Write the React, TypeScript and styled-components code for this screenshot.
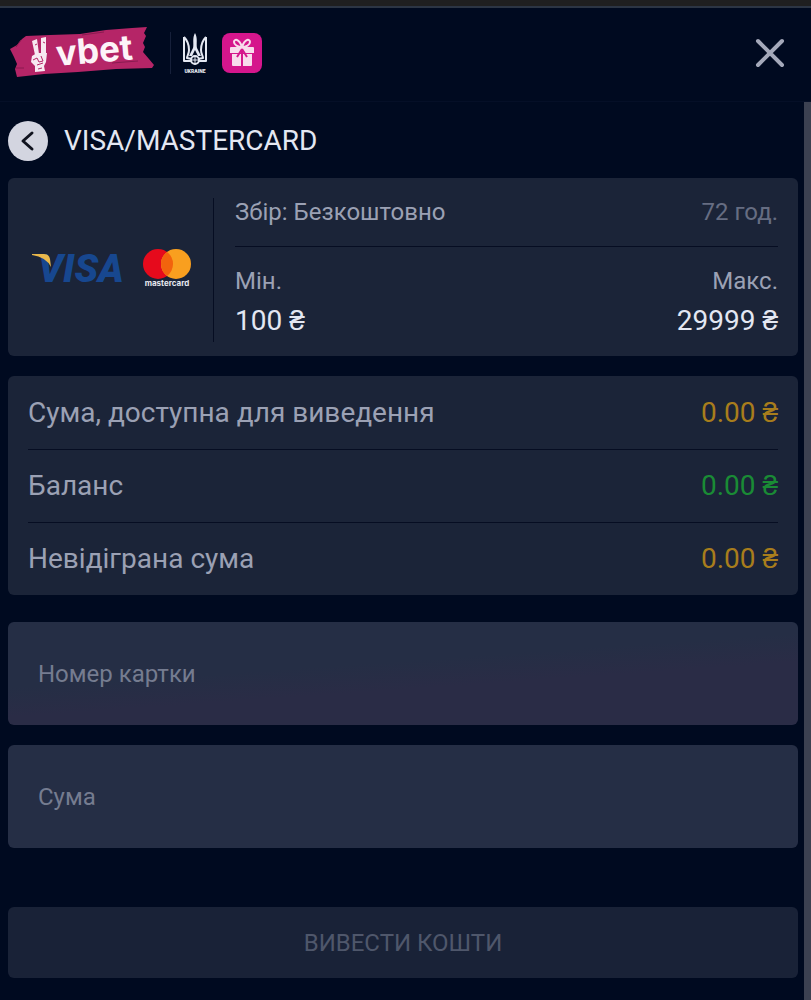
import React, { useState } from "react";
import styled, { createGlobalStyle } from "styled-components";

const GlobalStyle = createGlobalStyle`
  *, *::before, *::after { box-sizing: border-box; }
  body {
    margin: 0;
    background: #000a20;
    color: #e3e7f2;
    font-family: Roboto, "Liberation Sans", sans-serif;
  }
  h1, dl, dt, dd, p { margin: 0; font-weight: 400; }
`;

const Page = styled.div`
  display: flex;
  flex-direction: column;
  min-height: 100vh;
  border-top: 6px solid #1f1f20;
`;

const Header = styled.header`
  display: flex;
  align-items: center;
  justify-content: space-between;
  height: 96px;
  padding: 0 24px 4px 8px;
  border-top: 2px solid #2c3544;
  border-bottom: 1px solid #050f27;
`;

const Brand = styled.div`
  display: flex;
  align-items: center;
`;

const BrandLink = styled.a`
  display: flex;
`;

const BrandDivider = styled.span`
  width: 1px;
  height: 42px;
  margin: 0 12px 0 14px;
  background: #16203a;
`;

const GiftButton = styled.button`
  display: flex;
  align-items: center;
  justify-content: center;
  width: 40px;
  height: 40px;
  margin-left: 15px;
  padding: 0;
  border: 0;
  border-radius: 8px;
  background: #d5168c;
  cursor: pointer;
`;

const CloseButton = styled.button`
  display: flex;
  padding: 0;
  border: 0;
  background: none;
  color: #a4a9ba;
  cursor: pointer;
`;

const Body = styled.div`
  display: flex;
  flex: 1;
`;

const Content = styled.main`
  flex: 1;
  min-width: 0;
  padding: 19px 6px 20px 8px;
`;

const ScrollTrack = styled.div`
  width: 7px;
  background: #3c4151;
`;

const TitleRow = styled.div`
  display: flex;
  align-items: center;
  gap: 16px;
  height: 40px;
  margin-bottom: 17px;
`;

const BackButton = styled.button`
  display: flex;
  align-items: center;
  justify-content: center;
  width: 40px;
  height: 40px;
  padding: 0;
  border: 0;
  border-radius: 50%;
  background: #d3d5e0;
  color: #10131f;
  cursor: pointer;
`;

const Title = styled.h1`
  font-size: 28px;
  line-height: 40px;
`;

const Card = styled.section`
  border-radius: 6px;
  background: #1b2438;
`;

const MethodCard = styled(Card)`
  display: flex;
  padding: 20px 20px 14px 0;
  margin-bottom: 20px;
`;

const MethodLogos = styled.div`
  display: flex;
  align-items: center;
  justify-content: center;
  gap: 14px;
  width: 206px;
  padding-bottom: 4px;
  border-right: 1px solid #060d22;
`;

const MethodInfo = styled.div`
  flex: 1;
  padding-left: 21px;
`;

const FeeRow = styled.div`
  display: flex;
  justify-content: space-between;
  height: 49px;
  border-bottom: 1px solid #060d22;
  color: #9ba1b4;
  font-size: 24px;
  line-height: 28px;
`;

const Duration = styled.span`
  color: #666d82;
`;

const Limits = styled.dl`
  display: flex;
  justify-content: space-between;
  padding-top: 15px;
`;

const Limit = styled.div<{ $end?: boolean }>`
  text-align: ${(p) => (p.$end ? "right" : "left")};
  dt {
    color: #9ba1b4;
    font-size: 24px;
    line-height: 38px;
  }
  dd {
    font-size: 28px;
    line-height: 42px;
  }
`;

const BalanceCard = styled(Card)`
  padding: 0 20px;
  margin-bottom: 27px;
`;

const BalanceRow = styled.div`
  display: flex;
  align-items: center;
  justify-content: space-between;
  height: 73px;
  font-size: 28px;
  line-height: 40px;
  & + & {
    border-top: 1px solid #060d22;
  }
  dt {
    color: #9ba1b4;
  }
`;

const Amount = styled.dd<{ $tone: "amber" | "green" }>`
  color: ${(p) => (p.$tone === "amber" ? "#a87d1c" : "#1a8b35")};
`;

const Form = styled.form`
  display: flex;
  flex-direction: column;
  gap: 20px;
`;

const Field = styled.div<{ $tinted?: boolean }>`
  display: grid;
  height: 103px;
  border-radius: 6px;
  background: ${(p) =>
    p.$tinted ? "linear-gradient(176deg, #252e45 42%, #2a2c46 60%)" : "#252e45"};
  > * {
    grid-area: 1 / 1;
  }
`;

const FieldLabel = styled.label<{ $hidden: boolean }>`
  align-self: center;
  padding-left: 30px;
  color: #757c90;
  font-size: 24px;
  line-height: 28px;
  visibility: ${(p) => (p.$hidden ? "hidden" : "visible")};
`;

const FieldInput = styled.input`
  min-width: 0;
  padding: 0 30px;
  border: 0;
  outline: 0;
  border-radius: 6px;
  background: transparent;
  color: #e3e7f2;
  font: inherit;
  font-size: 24px;
`;

const SubmitButton = styled.button`
  height: 71px;
  margin-top: 39px;
  border: 0;
  border-radius: 6px;
  background: #192237;
  color: #4f576b;
  font: inherit;
  font-size: 24px;
`;

function VbetLogo() {
  return (
    <svg width="148" height="72" viewBox="0 -8 148 72" role="img" aria-label="vbet">
      <path
        d="M18 11 42 10 72 9 98 5 124 3 139 2 136 8 138 11 135 18 137 22 135 27 141 34 146 40 144 43 108 44 70 47 36 49 9 52 7 44 9 39 6 32 2 24 9 20 14 14Z"
        fill="#b52567"
      />
      <path d="M8 22 13 15M74 10l22-3M8 43h8M104 38l26-2" stroke="#8a1b50" strokeWidth="1" />
      <g fill="#f7e9f1">
        <path d="M24 16 29 14 31 29 27 30ZM33 13 38 12 38 29 33 30Z" />
        <path d="M24 31 29 28 39 28 38 37 36 41 37 46 27 47 27 41 23 37Z" />
      </g>
      <path d="M25 35l4-2 2 4 4-1M29 40l6-2M33 31l2 5M27 20l2-1M35 17l2 1M30 44l4-1" fill="none" stroke="#b52567" strokeWidth="1" />
      <text
        x="49"
        y="41"
        transform="rotate(-5 49 41)"
        fill="#fdf3f8"
        fontFamily="Inter, sans-serif"
        fontSize="35"
        fontWeight="700"
      >
        vbet
      </text>
    </svg>
  );
}

function TridentIcon() {
  return (
    <svg width="24" height="44" viewBox="0 -2 24 44" role="img" aria-label="Ukraine">
      <path
        d="M1 4C5 8 6 12 6 17c0 4-2 6-2 8l5 1M23 4c-4 4-5 8-5 13 0 4 2 6 2 8l-5 1M1 4v24h7M23 4v24h-7"
        fill="none"
        stroke="#e4e8f2"
        strokeWidth="2"
        strokeLinejoin="round"
      />
      <path d="M12 0c3 5 1 11 2 15l4 8h-3l-3-6-3 6H6l4-8c1-4-1-10 2-15Z" fill="#e4e8f2" />
      <circle cx="12" cy="27" r="4" fill="none" stroke="#e4e8f2" strokeWidth="2" />
      <path d="M8 27h8M12 23v9" stroke="#e4e8f2" strokeWidth="1" />
      <text
        x="12"
        y="40"
        textAnchor="middle"
        fill="#e4e8f2"
        fontFamily="Roboto, sans-serif"
        fontSize="5"
        fontWeight="900"
      >
        UKRAINE
      </text>
    </svg>
  );
}

function GiftIcon() {
  return (
    <svg width="26" height="30" viewBox="0 0 26 30" aria-hidden="true">
      <g fill="#f8dcec">
        <path d="M2 9h22q1 0 1 1v5H1v-5q0-1 1-1Z" />
        <path d="M3 16h9v12H4q-1 0-1-1ZM14 16h9v11q0 1-1 1h-8Z" />
      </g>
      <path d="M13 9C9 9 5 7 5 4s5-4 8 5c3-9 8-8 8-5s-4 5-8 5Z" fill="none" stroke="#f8dcec" strokeWidth="2" />
      <path d="M13 11 8 19M13 11l5 8M13 12v4" fill="none" stroke="#d5168c" strokeWidth="2" />
    </svg>
  );
}

function VisaLogo() {
  return (
    <svg width="98" height="60" viewBox="0 -10 98 60" role="img" aria-label="Visa">
      <text
        x="7"
        y="34"
        fill="#17478f"
        fontFamily="Roboto, sans-serif"
        fontSize="39"
        fontStyle="italic"
        fontWeight="900"
      >
        VISA
      </text>
      <path d="M1 6h12q5 0 6 5l1 8Q15 9 1 7Z" fill="#e9b74b" />
    </svg>
  );
}

function MastercardLogo() {
  return (
    <svg width="48" height="40" viewBox="0 0 48 40" role="img" aria-label="Mastercard">
      <circle cx="15" cy="16" r="15" fill="#e60a1c" />
      <circle cx="33" cy="16" r="15" fill="#f99f1f" />
      <path d="M24 4a15 15 0 0 1 0 24a15 15 0 0 1 0-24Z" fill="#f2630d" />
      <text
        x="24"
        y="38"
        textAnchor="middle"
        fill="#e6e8ef"
        fontFamily="Inter, sans-serif"
        fontSize="8"
        fontWeight="700"
      >
        mastercard
      </text>
    </svg>
  );
}

const balances: { label: string; value: string; tone: "amber" | "green" }[] = [
  { label: "Сума, доступна для виведення", value: "0.00 ₴", tone: "amber" },
  { label: "Баланс", value: "0.00 ₴", tone: "green" },
  { label: "Невідіграна сума", value: "0.00 ₴", tone: "amber" },
];

function TextField({ id, label, tinted }: { id: string; label: string; tinted?: boolean }) {
  const [value, setValue] = useState("");
  return (
    <Field $tinted={tinted}>
      <FieldLabel htmlFor={id} $hidden={value !== ""}>
        {label}
      </FieldLabel>
      <FieldInput
        id={id}
        type="text"
        inputMode="decimal"
        value={value}
        onChange={(e) => setValue(e.target.value)}
      />
    </Field>
  );
}

export default function App() {
  return (
    <Page>
      <GlobalStyle />
      <Header>
        <Brand>
          <BrandLink href="#home">
            <VbetLogo />
          </BrandLink>
          <BrandDivider />
          <TridentIcon />
          <GiftButton type="button" aria-label="Подарунки">
            <GiftIcon />
          </GiftButton>
        </Brand>
        <CloseButton type="button" aria-label="Закрити">
          <svg width="34" height="34" viewBox="0 0 34 34" aria-hidden="true">
            <path d="M5 5 29 29M29 5 5 29" stroke="currentColor" strokeWidth="4" strokeLinecap="round" />
          </svg>
        </CloseButton>
      </Header>
      <Body>
        <Content>
          <TitleRow>
            <BackButton type="button" aria-label="Назад">
              <svg width="24" height="24" viewBox="0 0 24 24" aria-hidden="true">
                <path
                  d="M16 4 7 12 16 20"
                  fill="none"
                  stroke="currentColor"
                  strokeWidth="3"
                  strokeLinecap="round"
                  strokeLinejoin="round"
                />
              </svg>
            </BackButton>
            <Title>VISA/MASTERCARD</Title>
          </TitleRow>

          <MethodCard>
            <MethodLogos>
              <VisaLogo />
              <MastercardLogo />
            </MethodLogos>
            <MethodInfo>
              <FeeRow>
                <span>Збір: Безкоштовно</span>
                <Duration>72 год.</Duration>
              </FeeRow>
              <Limits>
                <Limit>
                  <dt>Мін.</dt>
                  <dd>100 ₴</dd>
                </Limit>
                <Limit $end>
                  <dt>Макс.</dt>
                  <dd>29999 ₴</dd>
                </Limit>
              </Limits>
            </MethodInfo>
          </MethodCard>

          <BalanceCard as="dl">
            {balances.map((b) => (
              <BalanceRow key={b.label}>
                <dt>{b.label}</dt>
                <Amount $tone={b.tone}>{b.value}</Amount>
              </BalanceRow>
            ))}
          </BalanceCard>

          <Form onSubmit={(e) => e.preventDefault()}>
            <TextField id="card-number" label="Номер картки" tinted />
            <TextField id="amount" label="Сума" />
            <SubmitButton type="submit" disabled>
              ВИВЕСТИ КОШТИ
            </SubmitButton>
          </Form>
        </Content>
        <ScrollTrack aria-hidden="true" />
      </Body>
    </Page>
  );
}
